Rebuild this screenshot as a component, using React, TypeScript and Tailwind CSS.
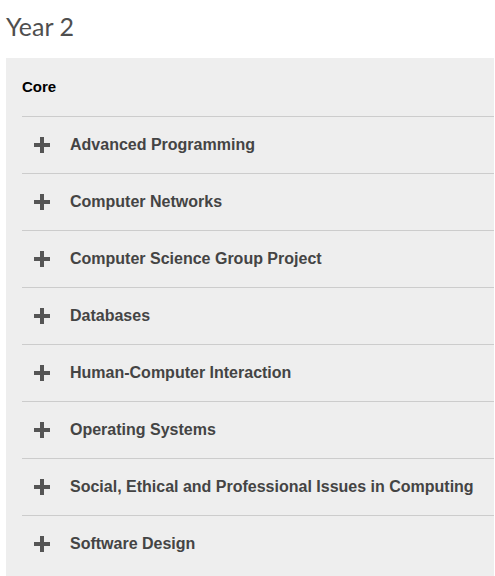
const modules = [
  "Advanced Programming",
  "Computer Networks",
  "Computer Science Group Project",
  "Databases",
  "Human-Computer Interaction",
  "Operating Systems",
  "Social, Ethical and Professional Issues in Computing",
  "Software Design",
]

function Plus() {
  return (
    <svg width="16" height="16" viewBox="0 0 16 16" className="shrink-0">
      <rect x="6" y="0" width="4" height="16" fill="#555555" />
      <rect x="0" y="6" width="16" height="4" fill="#555555" />
    </svg>
  )
}

export default function App() {
  return (
    <div className="min-h-screen bg-white" style={{fontFamily: "'Liberation Sans', Arial, sans-serif"}}>
      <h2 className="h-[58px] pl-[6px] pt-[10px] text-[25px] leading-[32px] text-[#4f4f4f] font-normal font-['Lato',sans-serif]">
        Year 2
      </h2>
      <div className="ml-[6px] mr-[1px] bg-[#eeeeee] pl-4 pb-8">
        <div className="h-[58px] flex items-center text-[15px] font-bold text-black">Core</div>
        {modules.map(m => (
          <div key={m} className="h-[57px] border-t border-[#cccccc] flex items-center pl-3 gap-5">
            <Plus />
            <span className="text-[16px] font-bold text-[#444444]">{m}</span>
          </div>
        ))}
      </div>
    </div>
  )
}
